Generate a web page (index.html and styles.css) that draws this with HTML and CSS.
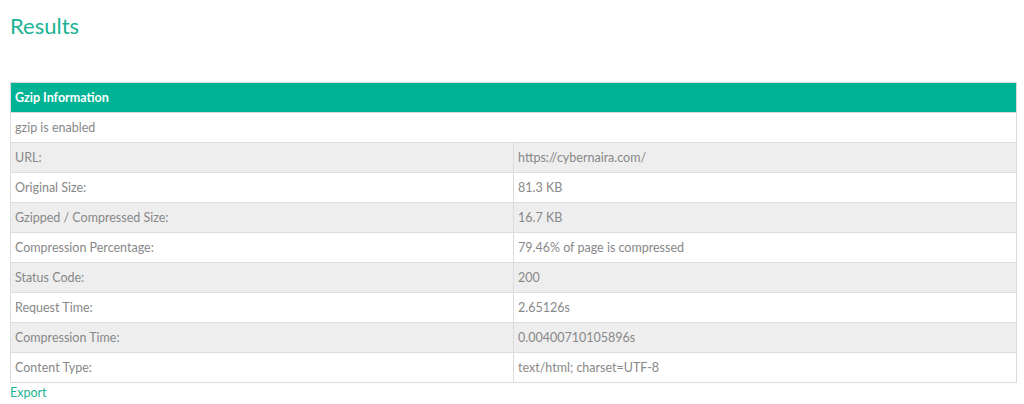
FILE: index.html
```html
<!DOCTYPE html>
<html>
<head>
<meta charset="utf-8">
<link rel="stylesheet" href="styles.css">
</head>
<body>
<h2 class="title">Results</h2>
<table class="info">
  <thead>
    <tr><th colspan="2">Gzip Information</th></tr>
  </thead>
  <tbody>
    <tr><td colspan="2">gzip is enabled</td></tr>
    <tr class="alt"><td>URL:</td><td>https://cybernaira.com/</td></tr>
    <tr><td>Original Size:</td><td>81.3 KB</td></tr>
    <tr class="alt"><td>Gzipped / Compressed Size:</td><td>16.7 KB</td></tr>
    <tr><td>Compression Percentage:</td><td>79.46% of page is compressed</td></tr>
    <tr class="alt"><td>Status Code:</td><td>200</td></tr>
    <tr><td>Request Time:</td><td>2.65126s</td></tr>
    <tr class="alt"><td>Compression Time:</td><td>0.00400710105896s</td></tr>
    <tr><td>Content Type:</td><td>text/html; charset=UTF-8</td></tr>
  </tbody>
</table>
<a class="export" href="#">Export</a>
</body>
</html>
```
FILE: styles.css
```css
body {
  margin: 0;
  padding: 0 7px 0 10px;
  font-family: Lato, "Open Sans", sans-serif;
  background: #fff;
}
.title {
  margin: 0;
  padding-top: 12px;
  height: 70px;
  box-sizing: border-box;
  font-size: 22px;
  font-weight: 400;
  color: #1ab394;
  line-height: 28px;
}
.info {
  width: 100%;
  border-collapse: collapse;
  margin-top: 12px;
  font-size: 12.5px;
  color: #888888;
}
.info th {
  background: #00b394;
  color: #fff;
  text-align: left;
  font-weight: 700;
  height: 29px;
  padding: 0 4px;
  border: 1px solid #d9d9d9;
  font-size: 12.5px;
}
.info td {
  height: 29px;
  padding: 0 4px;
  border: 1px solid #dcdcdc;
  width: 50%;
}
.info tr.alt td {
  background: #eeeeee;
}
.export {
  display: block;
  margin-top: 2px;
  font-size: 12.5px;
  color: #1ab394;
  text-decoration: none;
}
```
